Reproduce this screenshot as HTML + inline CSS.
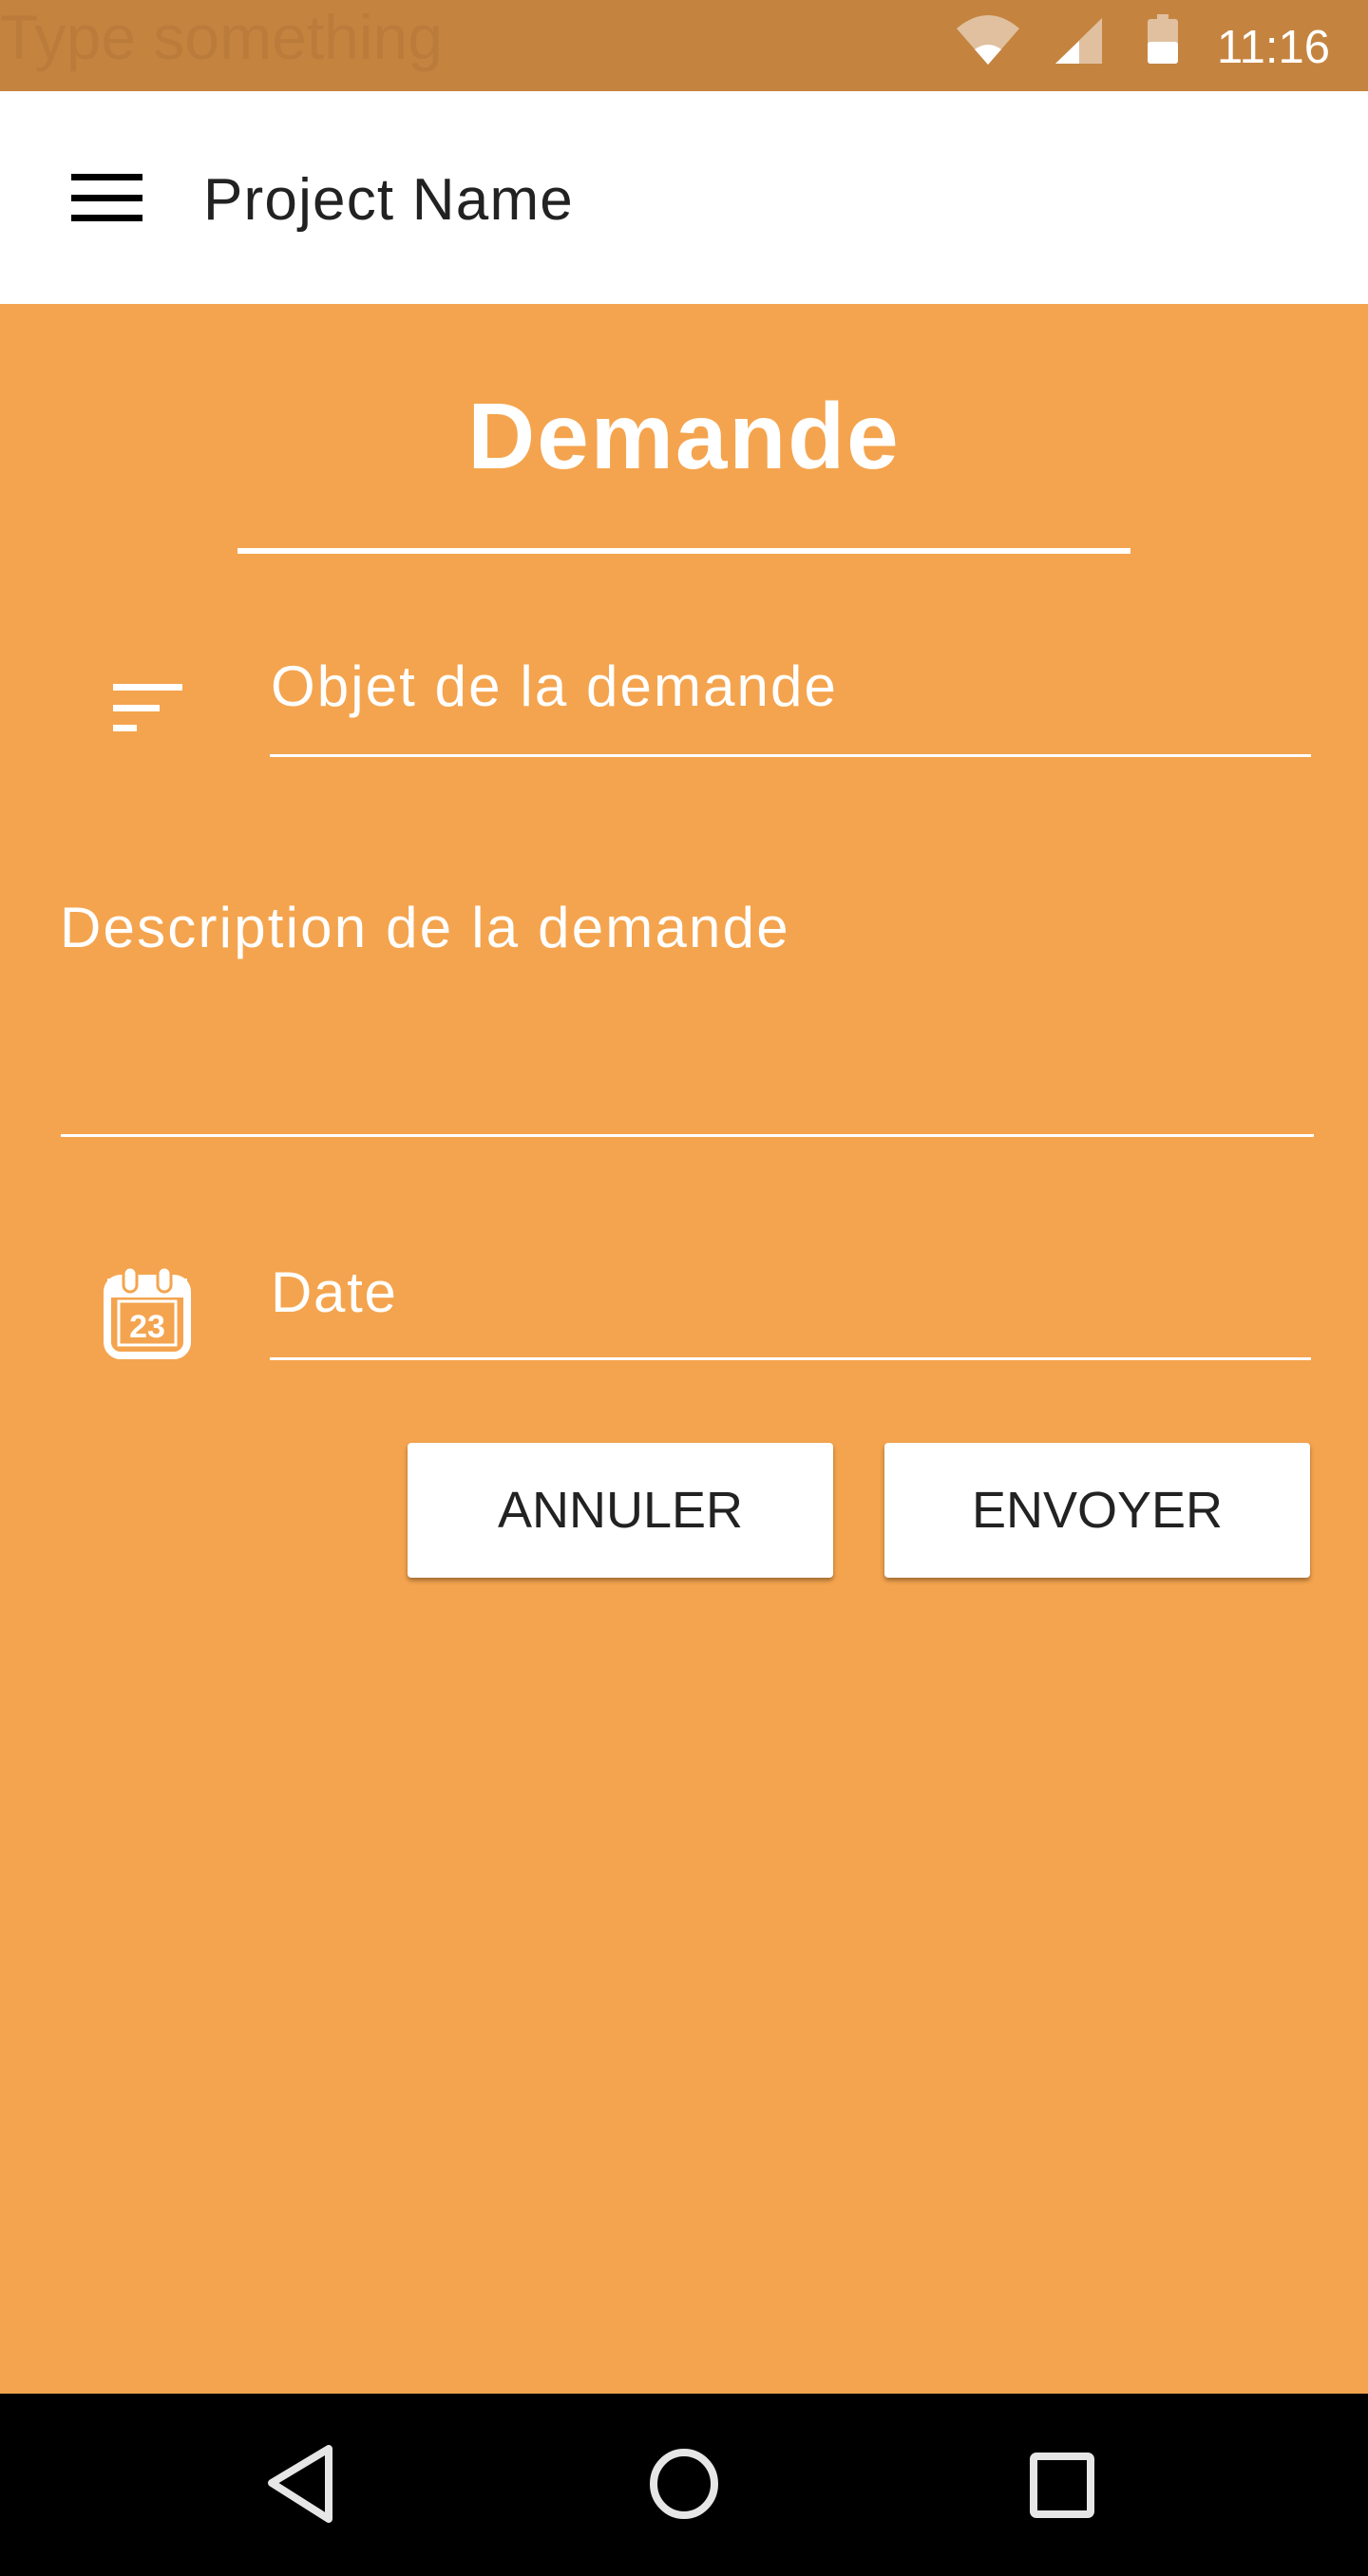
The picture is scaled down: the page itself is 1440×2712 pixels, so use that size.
<!DOCTYPE html>
<html><head><meta charset="utf-8"><style>
*{margin:0;padding:0;box-sizing:border-box}
body{width:1440px;height:2712px;background:#f4a44e;font-family:"Liberation Sans",sans-serif;position:relative;overflow:hidden}
.abs{position:absolute}
.status{left:0;top:0;width:1440px;height:96px;background:#c48440}
.appbar{left:0;top:96px;width:1440px;height:224px;background:#fff}
.line{background:#fff;height:3px}
.t{white-space:nowrap;line-height:1}
.btn{background:#fff;border-radius:4px;box-shadow:0 3px 5px rgba(0,0,0,.35);color:#222;font-size:54px;display:flex;align-items:center;justify-content:center}
.nav{left:0;top:2520px;width:1440px;height:192px;background:#000}
</style></head><body>
<div class="abs status"></div>
<div class="abs t" style="left:0;top:6px;font-size:66px;color:#bb7b3b">Type something</div>
<svg class="abs" style="left:1000px;top:15px" width="420" height="60" viewBox="1000 15 420 60">
<path d="M1007 30 Q1040 2 1073 30 L1040 68 Z" fill="#e0c09f"/>
<path d="M1026 52 Q1040 42 1054 52 L1040 68 Z" fill="#fff"/>
<path d="M1111 67 L1160 19 L1160 67 Z" fill="#e0c09f"/>
<path d="M1111 67 L1136 43 L1136 67 Z" fill="#fff"/>
<rect x="1218" y="15" width="12" height="6" fill="#e0c09f"/>
<rect x="1208" y="20" width="32" height="47" rx="3" fill="#e0c09f"/>
<rect x="1208" y="44" width="32" height="23" rx="3" fill="#fff"/>
</svg>
<div class="abs t" style="left:1281px;top:26px;font-size:49px;color:#fff">11:16</div>
<div class="abs appbar"></div>
<div class="abs" style="left:75px;top:183px;width:75px;height:7px;background:#000"></div>
<div class="abs" style="left:75px;top:205px;width:75px;height:7px;background:#000"></div>
<div class="abs" style="left:75px;top:226px;width:75px;height:7px;background:#000"></div>
<div class="abs t" style="left:214px;top:180px;font-size:62px;color:#222;letter-spacing:1.2px">Project Name</div>
<div class="abs t" style="left:0;width:1440px;text-align:center;top:410px;font-size:98px;font-weight:bold;color:#fff;letter-spacing:2px">Demande</div>
<div class="abs line" style="left:250px;top:577px;width:940px;height:6px"></div>
<div class="abs" style="left:119px;top:720px;width:73px;height:7px;background:#fff"></div>
<div class="abs" style="left:119px;top:742px;width:49px;height:7px;background:#fff"></div>
<div class="abs" style="left:119px;top:763px;width:25px;height:7px;background:#fff"></div>
<div class="abs t" style="left:285px;top:693px;font-size:60px;color:#fff;letter-spacing:2.1px">Objet de la demande</div>
<div class="abs line" style="left:284px;top:794px;width:1096px"></div>
<div class="abs t" style="left:63px;top:947px;font-size:60px;color:#fff;letter-spacing:2.2px">Description de la demande</div>
<div class="abs line" style="left:64px;top:1194px;width:1319px"></div>
<svg class="abs" style="left:108px;top:1332px" width="94" height="100" viewBox="0 0 94 100">
<rect x="5" y="14" width="84" height="81" rx="14" fill="none" stroke="#fff" stroke-width="8"/>
<rect x="5" y="14" width="84" height="20" fill="#fff"/>
<rect x="22" y="2" width="14" height="26" rx="7" fill="#fff" stroke="#f4a44e" stroke-width="3"/>
<rect x="58" y="2" width="14" height="26" rx="7" fill="#fff" stroke="#f4a44e" stroke-width="3"/>
<rect x="17" y="38" width="60" height="46" fill="none" stroke="#fff" stroke-width="3"/>
<text x="47" y="76" text-anchor="middle" font-family="Liberation Sans" font-weight="bold" font-size="34" fill="#fff">23</text>
</svg>
<div class="abs t" style="left:285px;top:1331px;font-size:60px;color:#fff;letter-spacing:1.7px">Date</div>
<div class="abs line" style="left:284px;top:1429px;width:1096px"></div>
<div class="abs btn" style="left:429px;top:1519px;width:448px;height:142px">ANNULER</div>
<div class="abs btn" style="left:931px;top:1519px;width:448px;height:142px">ENVOYER</div>
<div class="abs nav"></div>
<svg class="abs" style="left:0;top:2520px" width="1440" height="192" viewBox="0 2520 1440 192">
<path d="M346 2578 L346 2652 L286 2614 Z" fill="none" stroke="#e6e6e6" stroke-width="8" stroke-linejoin="round"/>
<ellipse cx="720" cy="2615" rx="32" ry="33" fill="none" stroke="#e6e6e6" stroke-width="8"/>
<rect x="1088" y="2586" width="60" height="61" rx="3" fill="none" stroke="#e6e6e6" stroke-width="8"/>
</svg>
</body></html>
